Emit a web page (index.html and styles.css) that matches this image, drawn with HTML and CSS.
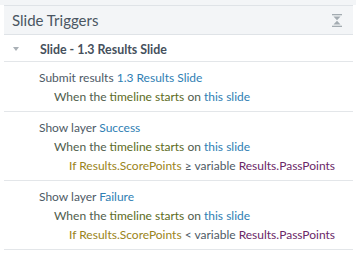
FILE: index.html
```html
<!DOCTYPE html>
<html lang="en">
<head>
    <meta charset="UTF-8">
    <title>Slide Triggers</title>
    <link rel="stylesheet" href="styles.css">
</head>
<body>
    <div class="top-strip"></div>
    <div class="panel">
        <div class="panel-header">
            <span class="panel-title">Slide Triggers</span>
            <svg class="collapse-icon" width="10" height="13" viewBox="0 0 10 13">
                <rect x="0" y="0" width="10" height="1.3" fill="#a3abb1"/>
                <polygon points="1.5,2.4 8.5,2.4 5,6.2" fill="#a3abb1"/>
                <polygon points="1.5,10.6 8.5,10.6 5,6.8" fill="#a3abb1"/>
                <rect x="0" y="11.7" width="10" height="1.3" fill="#a3abb1"/>
            </svg>
        </div>

        <div class="group-row">
            <span class="caret"></span>
            <span class="group-title">Slide - 1.3 Results Slide</span>
        </div>

        <div class="trigger">
            <div class="line">Submit results <span class="obj">1.3 Results Slide</span></div>
            <div class="line lvl1">When the <span class="evt">timeline starts</span> on <span class="obj">this slide</span></div>
        </div>

        <div class="trigger">
            <div class="line">Show layer <span class="obj">Success</span></div>
            <div class="line lvl1">When the <span class="evt">timeline starts</span> on <span class="obj">this slide</span></div>
            <div class="line lvl2"><span class="cond">If Results.ScorePoints</span> &ge; variable <span class="var">Results.PassPoints</span></div>
        </div>

        <div class="trigger">
            <div class="line">Show layer <span class="obj">Failure</span></div>
            <div class="line lvl1">When the <span class="evt">timeline starts</span> on <span class="obj">this slide</span></div>
            <div class="line lvl2"><span class="cond">If Results.ScorePoints</span> &lt; variable <span class="var">Results.PassPoints</span></div>
        </div>
    </div>
</body>
</html>
```

FILE: styles.css
```css
body {
    margin: 0;
    font-family: Lato, 'Open Sans', sans-serif;
    font-size: 12px;
    color: #4e5a66;
    background-color: white;
}
.top-strip {
    height: 5px;
    background-color: #f3f5f7;
}
.panel {
    margin: 0 3px 0 4px;
}
.panel-header {
    display: flex;
    align-items: center;
    justify-content: space-between;
    height: 28px;
    padding: 0 11px 0 8px;
    background-color: #f3f5f7;
    border-top: 1px solid #dfe3e7;
    border-bottom: 1px solid #dfe3e7;
}
.panel-title {
    font-size: 15px;
    color: #4a5662;
}
.collapse-icon {
    display: block;
}
.group-row {
    display: flex;
    align-items: center;
    height: 27px;
    padding-top: 2px;
    box-sizing: border-box;
    border-bottom: 1px solid #e3e6e9;
}
.caret {
    width: 0;
    height: 0;
    margin: 0 21px 0 9px;
    border-left: 3.5px solid transparent;
    border-right: 3.5px solid transparent;
    border-top: 4px solid #a9b0b6;
}
.group-title {
    font-weight: bold;
    font-size: 12.4px;
    color: #45505c;
}
.trigger {
    padding: 6px 0 5px 35px;
    border-bottom: 1px solid #e3e6e9;
}
.line {
    line-height: 19px;
    white-space: nowrap;
}
.lvl1 {
    padding-left: 15px;
    color: #4f5d4c;
}
.lvl2 {
    padding-left: 30px;
    color: #4e5a66;
}
.obj {
    color: #2f80b4;
}
.evt {
    color: #5c6b1c;
}
.cond {
    color: #9a8420;
}
.var {
    color: #6b2868;
}
```
